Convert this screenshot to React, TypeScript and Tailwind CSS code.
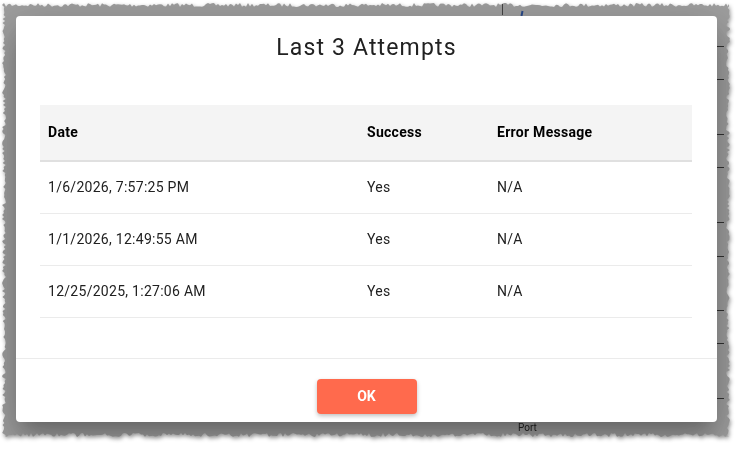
import { useMemo } from "react";

const attempts = [
  { date: "1/6/2026, 7:57:25 PM", success: "Yes", error: "N/A" },
  { date: "1/1/2026, 12:49:55 AM", success: "Yes", error: "N/A" },
  { date: "12/25/2025, 1:27:06 AM", success: "Yes", error: "N/A" },
];

// ticks of the page that shows through on the right edge
const rightTicks = [46, 79, 134, 167, 222, 256, 310, 343, 398];

function tornPolygon(w: number, h: number) {
  let seed = 7;
  const rnd = () => {
    seed = (seed * 16807) % 2147483647;
    return seed / 2147483647;
  };
  const pts: string[] = [];
  for (let x = 4; x <= w - 12; x += 2) pts.push(`${x}px ${3 + rnd() * 4}px`);
  for (let y = 4; y <= h - 12; y += 2) pts.push(`${w - 15 + rnd() * 4}px ${y}px`);
  for (let x = w - 12; x >= 4; x -= 2) pts.push(`${x}px ${h - 16 + rnd() * 4}px`);
  for (let y = h - 12; y >= 4; y -= 2) pts.push(`${2 + rnd() * 4}px ${y}px`);
  return `polygon(${pts.join(",")})`;
}

export default function App() {
  const clip = useMemo(() => tornPolygon(741, 449), []);

  return (
    <div className="w-[741px] h-[449px] bg-white overflow-hidden font-['Roboto',sans-serif]">
      <div className="w-full h-full [filter:drop-shadow(1px_2px_2px_rgba(0,0,0,0.45))]">
        <div className="relative w-full h-full bg-[#9f9f9f] pt-4 pl-4" style={{ clipPath: clip }}>
          {/* page underneath */}
          {rightTicks.map((y) => (
            <div key={y} className="absolute left-[716px] w-[8px] h-px bg-[#333]" style={{ top: y }} />
          ))}
          <div className="absolute left-[502px] top-0 w-px h-[15px] bg-[#444]" />
          <div className="absolute left-[521px] top-[11px] w-[2px] h-[5px] bg-[#2a4a8a] rotate-12" />
          <div className="absolute left-[518px] top-[422px] text-[10px] leading-[12px] text-[#222]">Port</div>

          <div className="relative w-[701px] h-[406px] bg-white rounded-[4px] flex flex-col shadow-[0_11px_15px_-7px_rgba(0,0,0,0.2),0_24px_38px_3px_rgba(0,0,0,0.14),0_9px_46px_8px_rgba(0,0,0,0.12)]">
            <h2 className="pt-4 h-[48px] leading-[32px] text-center text-[23px] tracking-[0.05em] text-[#212121]">
              Last 3 Attempts
            </h2>

            <div className="mt-[41px] ml-6 w-[652px] text-[14px] text-[#212121]">
              <div className="flex h-[57px] items-center bg-[#f4f4f4] border-b-2 border-[#e0e0e0] font-bold tracking-[0.02em] text-black">
                <div className="w-[319px] pl-2">Date</div>
                <div className="w-[130px] pl-2">Success</div>
                <div className="flex-1 pl-2">Error Message</div>
              </div>
              {attempts.map((a) => (
                <div key={a.date} className="flex h-[52px] items-center border-b border-[#ebebeb] tracking-[0.02em]">
                  <div className="w-[319px] pl-2">{a.date}</div>
                  <div className="w-[130px] pl-2">{a.success}</div>
                  <div className="flex-1 pl-2">{a.error}</div>
                </div>
              ))}
            </div>

            <div className="mt-10 border-t border-[#ebebeb] flex justify-center pt-5">
              <button className="w-[100px] h-[35px] rounded-[4px] bg-[#ff6a4d] text-white font-bold text-[14px] shadow-[0_2px_4px_rgba(0,0,0,0.25)]">
                OK
              </button>
            </div>
          </div>
        </div>
      </div>
    </div>
  );
}
